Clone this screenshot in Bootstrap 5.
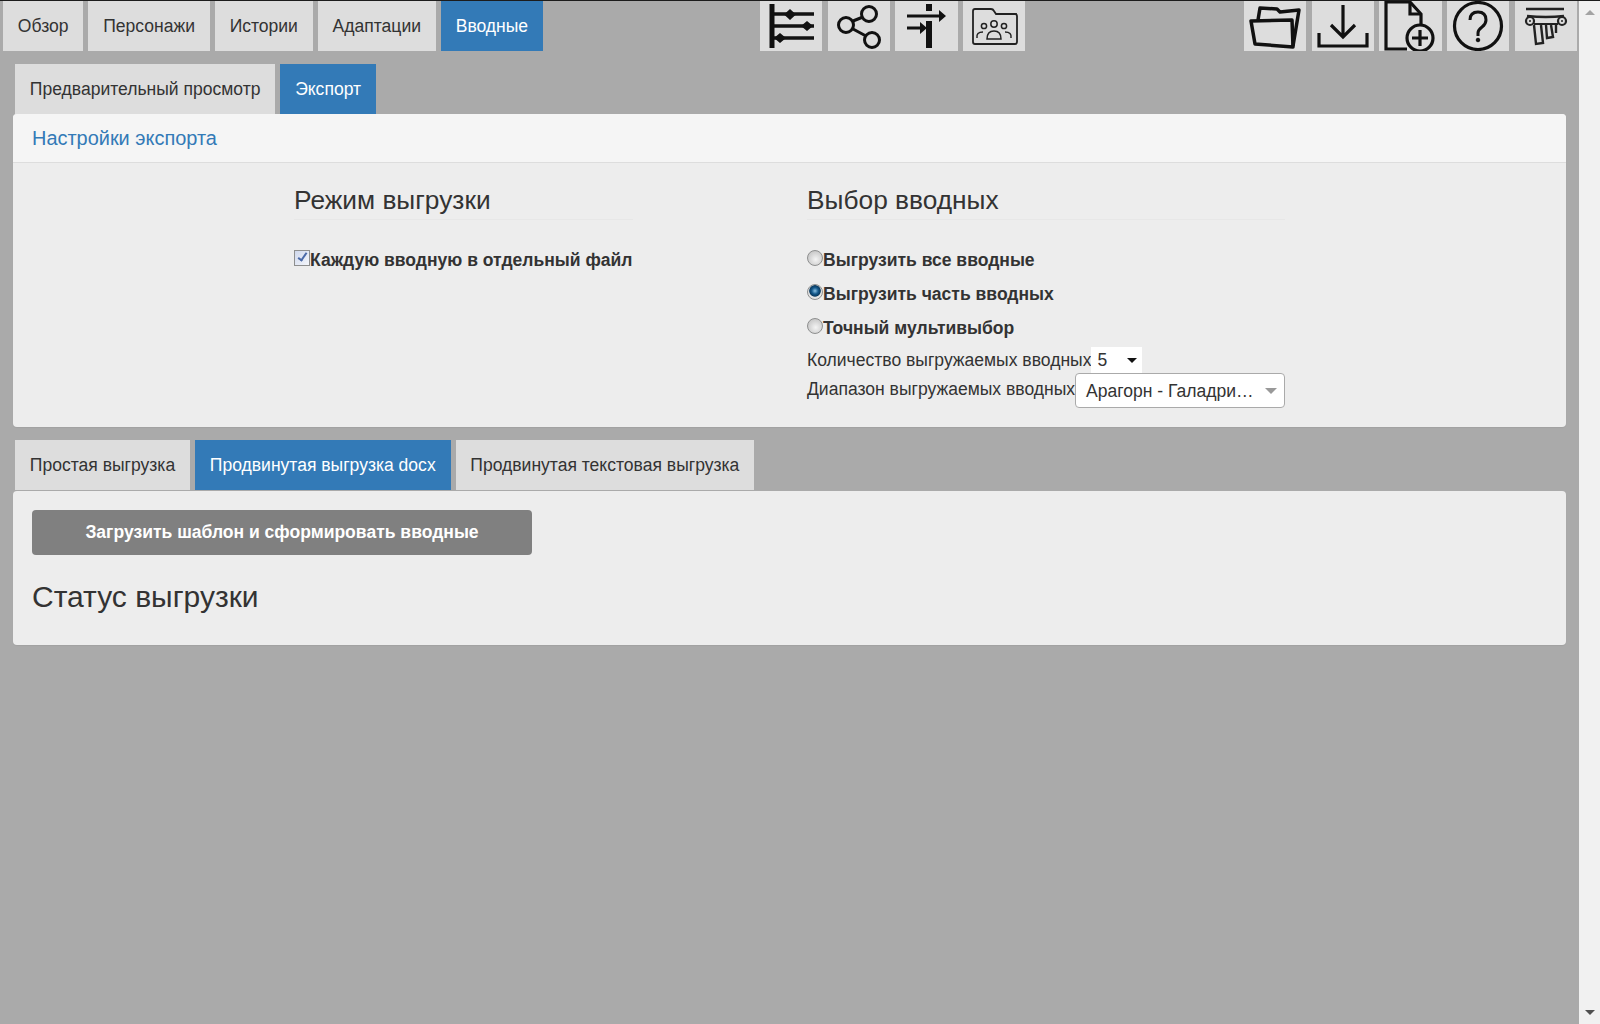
<!DOCTYPE html>
<html lang="ru">

<head>
    <meta charset="utf-8">
    <link rel="stylesheet" href="https://cdn.jsdelivr.net/npm/bootstrap@5.3.0/dist/css/bootstrap.min.css">
    <style>
        html, body { height: 100%; }
        body { background: #aaa; color: #333; font-family: "Liberation Sans", Arial, sans-serif; font-size: 17.55px; line-height: 1.42857; border-top: 1px solid #1c1c1c; overflow: hidden; }
        .page-main { min-width: 0; width: 1579px; }
        .top-bar { padding-left: 3px; height: 50px; }
        .tab-row { gap: 5px; }
        .tab-link { background: #ddd; color: #333; padding: 0 14.85px; height: 50px; line-height: 50px; display: block; white-space: nowrap; text-decoration: none; }
        .tab-link:hover { color: #333; background: #ddd; }
        .tab-link.is-active, .tab-link.is-active:hover { background: #337ab7; color: #fff; }
        .tool-group { gap: 5.5px; }
        .tools-mid { margin-left: 217px; }
        .tools-end { margin-left: auto; margin-right: 2px; }
        .tool-btn { width: 62.2px; height: 50px; background: #ddd; border: 0; padding: 0; display: block; }
        .tool-btn svg { display: block; width: 62px; height: 50px; }
        .sub-tabs { margin: 13px 0 0 15px; }
        .lower-tabs { margin: 13px 0 0 15px; }
        .sheet { margin: 0 13px; background: #ededed; border: 0; border-radius: 4px; box-shadow: 0 1px 1px rgba(0,0,0,.05); color: #333; }
        .lower-tabs + .sheet { margin-top: 1px; }
        .sheet-head { background: #f5f5f5; border-bottom: 1px solid #ddd; height: 49px; padding: 0 19px; line-height: 49px; font-size: 19.95px; color: #337ab7; border-radius: 4px 4px 0 0; }
        .sheet-body { height: 264px; padding-top: 15px; gap: 174px; }
        .col-mode { width: 339px; }
        .col-pick { width: 478px; }
        .col-title { font-size: 26.3px; line-height: 1.1; font-weight: 400; margin: 8px 0 0; border-bottom: 1px solid #e7e7e7; height: 34px; }
        .opt-list { margin-top: 23px; }
        .opt-row { height: 34px; font-weight: 700; line-height: 34px; margin: 0; white-space: nowrap; }
        .opt-box { appearance: none; width: 16px; height: 16px; margin: 0; flex: none; background: linear-gradient(135deg, #d8d8d8, #fdfdfd); border: 1px solid #8e8f8f; position: relative; top: -2px; }
        .opt-box:checked { background: linear-gradient(135deg, #cfd8ec, #f4f6fb); }
        .opt-box:checked::after { content: ""; display: block; width: 5px; height: 10px; margin: 0 0 0 5px; border: solid #4a6aa8; border-width: 0 2px 2px 0; transform: rotate(35deg); }
        .opt-radio { border-radius: 50%; background: radial-gradient(circle at 55% 60%, #f4f4f4, #c8c8c8 75%); }
        .opt-radio:checked { background: radial-gradient(circle at 50% 42%, #8cc2e4 0, #14598c 30%, #0a3a60 50%, #e4e4e4 58%); }
        .opt-radio:checked::after { display: none; }
        .field-row { white-space: nowrap; }
        .count-row { height: 26px; line-height: 26px; margin-top: 2px; }
        .count-pick { width: 51px; height: 26px; background: #fff; padding-left: 6px; line-height: 26px; position: relative; display: inline-block; }
        .count-pick::after { content: ""; position: absolute; right: 5px; top: 11px; border: 5px solid transparent; border-top-color: #111; border-bottom: 0; }
        .range-row { height: 35px; line-height: 32px; }
        .range-pick { flex: 1; min-width: 0; height: 35px; background: #fff; border: 1px solid #aaa; border-radius: 4px; padding: 0 24px 0 10px; line-height: 35px; position: relative; }
        .range-pick::after { content: ""; position: absolute; right: 7px; top: 14px; border: 6px solid transparent; border-top-color: #999; border-bottom: 0; }
        .body-lower { height: 154px; padding: 19px 18px 0 19px; }
        .load-btn { width: 500px; height: 45px; background: #808080; border: 0; border-radius: 4px; color: #fff; font-weight: 700; font-size: 17.55px; padding: 0; display: block; }
        .load-btn:hover { background: #808080; color: #fff; }
        .status-title { font-size: 30px; font-weight: 400; line-height: 1.1; margin: 25px 0 0; }
        .scroll-rail { width: 21px; background: #f1f1f1; flex: none; }
        .rail-up, .rail-down { width: 0; height: 0; border: 5px solid transparent; }
        .rail-up { border-bottom: 5px solid #a3a3a3; border-top: 0; margin-top: 9px; }
        .rail-down { border-top: 5px solid #505050; border-bottom: 0; margin-bottom: 9px; }
    </style>
</head>

<body class="d-flex">
    <div class="page-main">
        <div class="top-bar d-flex">
            <nav class="nav tab-row flex-nowrap">
                <a class="tab-link" href="#">Обзор</a>
                <a class="tab-link" href="#">Персонажи</a>
                <a class="tab-link" href="#">Истории</a>
                <a class="tab-link" href="#">Адаптации</a>
                <a class="tab-link is-active" href="#">Вводные</a>
            </nav>
            <div class="d-flex tool-group tools-mid">
                <button class="tool-btn" title="Таймлайн">
                    <svg viewBox="0 0 62 50" fill="none" stroke="#111">
                        <path d="M12 3V47" stroke-width="5" />
                        <path d="M12 13h42M12 25h42M12 37h42" stroke-width="3.500" />
                        <path d="M30 8l6 5.500-6 5.500-6-5.500zM47 20l6 5-6 5-6-5zM20 32l6 5-6 5-6-5z" fill="#111" stroke="none" />
                    </svg>
                </button>
                <button class="tool-btn" title="Связи">
                    <svg viewBox="0 0 62 50" fill="none" stroke="#111" stroke-width="3">
                        <circle cx="18" cy="24" r="7.500" />
                        <circle cx="41" cy="13" r="7.500" />
                        <circle cx="44" cy="39" r="7.500" />
                        <path d="M25 20l10-4M25 28l13 7" />
                    </svg>
                </button>
                <button class="tool-btn" title="Адаптации">
                    <svg viewBox="0 0 62 50" fill="none" stroke="#111">
                        <path d="M34 3v7M34 20v27" stroke-width="6" />
                        <path d="M12 15h35M12 27h16" stroke-width="3" />
                        <path d="M44 9l7 6-7 6zM25 21l7 6-7 6z" fill="#111" stroke="none" />
                    </svg>
                </button>
                <button class="tool-btn" title="Группы">
                    <svg viewBox="0 0 62 50" fill="none" stroke="#222" stroke-width="1.500">
                        <path d="M10 41V10q0-2 2-2h16q2 0 3 2l2 3h19q2 0 2 2v26q0 2-2 2H12q-2 0-2-2z" stroke-width="1.800" />
                        <path d="M33 13h21" />
                        <circle cx="31" cy="23" r="3.200" />
                        <circle cx="21" cy="25" r="2.600" />
                        <circle cx="41" cy="25" r="2.600" />
                        <path d="M24 38q0-8 7-8t7 8zM14 37q-1-6 6-6M48 37q1-6-6-6" />
                    </svg>
                </button>
            </div>
            <div class="d-flex tool-group tools-end">
                <button class="tool-btn" title="Открыть">
                    <svg viewBox="0 0 62 50" fill="none" stroke="#111" stroke-width="3.500" stroke-linejoin="round">
                        <path d="M7 20l41-1 1 27-38-3z" />
                        <path d="M14 19l2-12 17 1 3 3 19-2-6 36" />
                    </svg>
                </button>
                <button class="tool-btn" title="Скачать">
                    <svg viewBox="0 0 62 50" fill="none" stroke="#111" stroke-width="3.200">
                        <path d="M31 4v32M19 24l12 12 12-12" />
                        <path d="M7 32v13h48V32" />
                    </svg>
                </button>
                <button class="tool-btn" title="Создать">
                    <svg viewBox="0 0 62 50" fill="none" stroke="#111" stroke-width="3.200">
                        <path d="M28 48H7V1h24l11 12v12" />
                        <path d="M31 1v12h11" />
                        <circle cx="41" cy="37" r="13" />
                        <path d="M33 37h16M41 29v16" />
                    </svg>
                </button>
                <button class="tool-btn" title="Справка">
                    <svg viewBox="0 0 62 50" fill="none" stroke="#111" stroke-width="3.200">
                        <circle cx="31" cy="25" r="23.500" />
                        <path d="M23 19q0-8 8-8t8 8q0 4-4 7t-4 6v3" stroke-width="3" />
                        <circle cx="31" cy="39" r="1.800" fill="#111" stroke-width="1" />
                    </svg>
                </button>
                <button class="tool-btn" title="О программе">
                    <svg viewBox="0 0 62 50" fill="none" stroke="#222" stroke-width="2.400">
                        <path d="M11 8h38M12 15q19 2 37 0" />
                        <circle cx="15" cy="20" r="4" stroke-width="2.200" />
                        <circle cx="47" cy="20" r="4" stroke-width="2.200" />
                        <circle cx="15" cy="20" r="1" fill="#222" stroke="none" />
                        <circle cx="47" cy="20" r="1" fill="#222" stroke="none" />
                        <path d="M19 23h24" stroke-width="2" />
                        <path d="M19 24l2 19 7-1-2-18M31 24l1 13 6-1-2-12M41 24v8" />
                    </svg>
                </button>
            </div>
        </div>

        <nav class="nav tab-row sub-tabs">
            <a class="tab-link" href="#">Предварительный просмотр</a>
            <a class="tab-link is-active" href="#">Экспорт</a>
        </nav>
        <div class="card sheet">
            <div class="sheet-head">Настройки экспорта</div>
            <div class="d-flex justify-content-center sheet-body">
                <div class="col-mode">
                    <h3 class="col-title">Режим выгрузки</h3>
                    <div class="opt-list">
                        <label class="opt-row d-flex align-items-center">
                            <input class="opt-box" type="checkbox" checked>Каждую вводную в отдельный файл
                        </label>
                    </div>
                </div>
                <div class="col-pick">
                    <h3 class="col-title">Выбор вводных</h3>
                    <div class="opt-list">
                        <label class="opt-row d-flex align-items-center">
                            <input class="opt-box opt-radio" type="radio" name="pick">Выгрузить все вводные
                        </label>
                        <label class="opt-row d-flex align-items-center">
                            <input class="opt-box opt-radio" type="radio" name="pick" checked>Выгрузить часть вводных
                        </label>
                        <label class="opt-row d-flex align-items-center">
                            <input class="opt-box opt-radio" type="radio" name="pick">Точный мультивыбор
                        </label>
                    </div>
                    <div class="field-row count-row d-flex">
                        <span>Количество выгружаемых вводных</span>
                        <span class="count-pick">5</span>
                    </div>
                    <div class="field-row range-row d-flex">
                        <span>Диапазон выгружаемых вводных</span>
                        <div class="range-pick text-truncate">Арагорн - Галадриэль</div>
                    </div>
                </div>
            </div>
        </div>

        <nav class="nav tab-row lower-tabs">
            <a class="tab-link" href="#">Простая выгрузка</a>
            <a class="tab-link is-active" href="#">Продвинутая выгрузка docx</a>
            <a class="tab-link" href="#">Продвинутая текстовая выгрузка</a>
        </nav>
        <div class="card sheet">
            <div class="body-lower">
                <button class="btn load-btn">Загрузить шаблон и сформировать вводные</button>
                <h2 class="status-title">Статус выгрузки</h2>
            </div>
        </div>
    </div>
    <div class="scroll-rail d-flex flex-column align-items-center justify-content-between">
        <div class="rail-up"></div>
        <div class="rail-down"></div>
    </div>
</body>

</html>
